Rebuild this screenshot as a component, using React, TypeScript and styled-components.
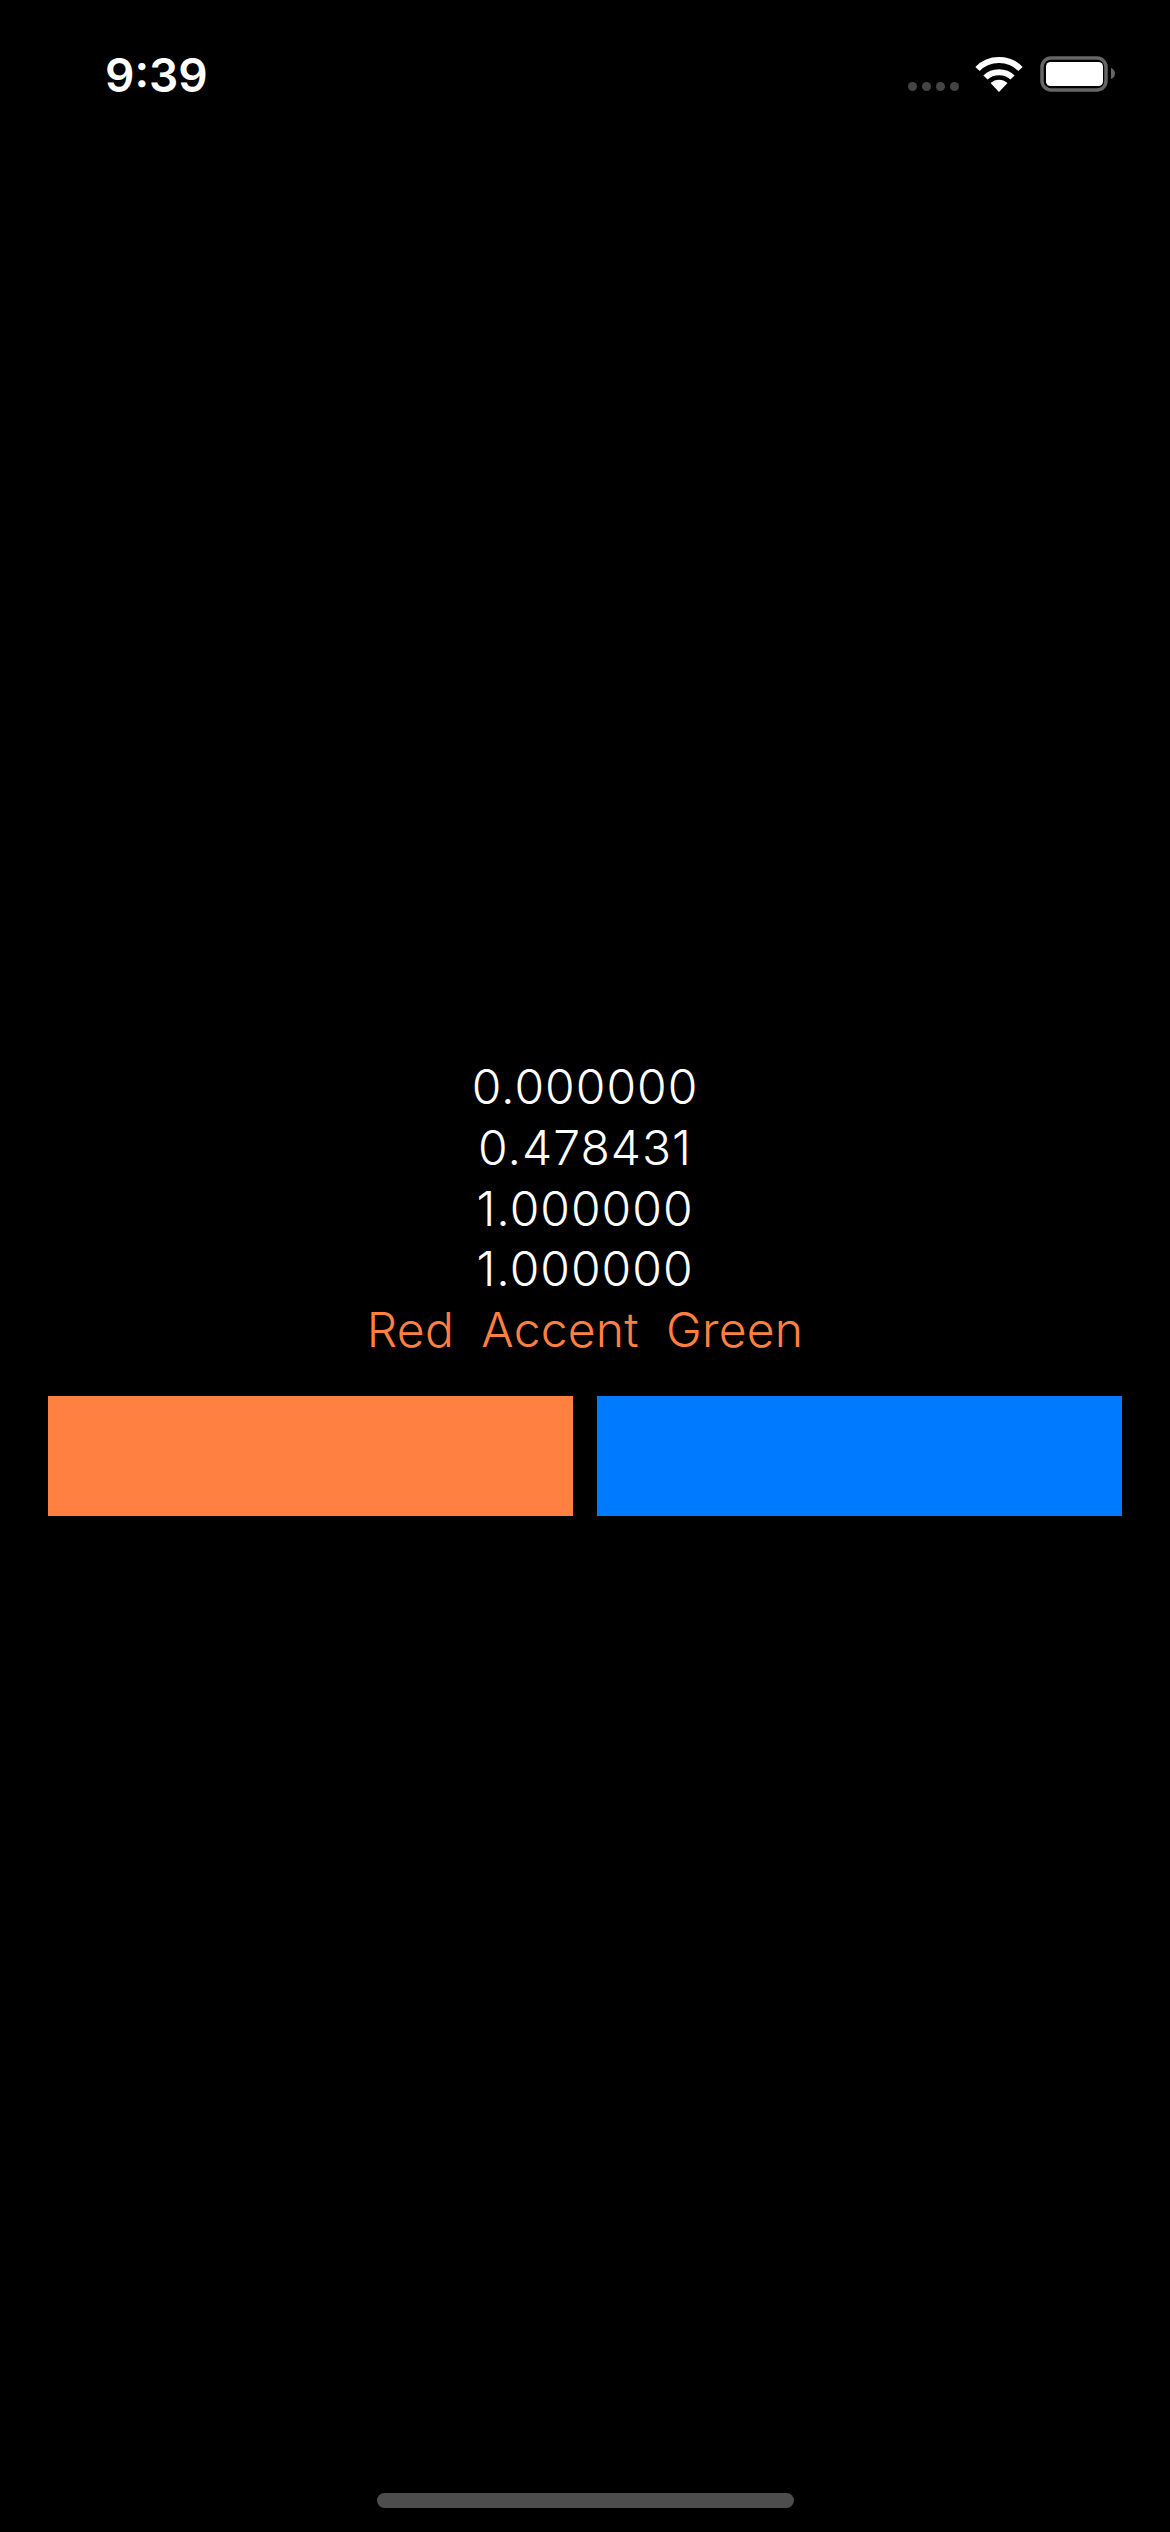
import React from "react";
import styled, { createGlobalStyle } from "styled-components";

const GlobalStyle = createGlobalStyle`
  html, body { margin: 0; padding: 0; background: #000; }
`;

const Screen = styled.div`
  width: 1170px;
  height: 2532px;
  background: #000;
  display: flex;
  flex-direction: column;
  font-family: Inter, "Liberation Sans", sans-serif;
  overflow: hidden;
`;

const StatusBar = styled.header`
  height: 1057px;
  box-sizing: border-box;
  padding: 47px 55px 0 105px;
  display: flex;
  justify-content: space-between;
  align-items: flex-start;
`;

const Clock = styled.span`
  font-size: 46px;
  line-height: 56px;
  font-weight: 600;
  color: #fff;
`;

const StatusIcons = styled.div`
  display: flex;
  align-items: flex-end;
  padding-top: 9px;
`;

const Dots = styled.div`
  display: flex;
  gap: 5px;
  margin-right: 16px;
  margin-bottom: 1px;
`;

const Dot = styled.span`
  width: 9px;
  height: 9px;
  border-radius: 50%;
  background: #444;
`;

const Wifi = styled.svg`
  width: 48px;
  height: 35px;
  margin-right: 17px;
  display: block;
`;

const Battery = styled.svg`
  width: 75px;
  height: 36px;
  display: block;
`;

const Readout = styled.section`
  display: flex;
  flex-direction: column;
  align-items: center;
  font-size: 48px;
  line-height: 60.75px;
  color: #fff;
  font-weight: 350;
`;

const Line = styled.div<{ $accent?: boolean }>`
  white-space: pre;
  letter-spacing: ${(p) => (p.$accent ? "0.2px" : "1px")};
  color: ${(p) => (p.$accent ? "#ff8040" : "#fff")};
`;

const Swatches = styled.div`
  display: flex;
  gap: 24px;
  padding: 0 48px;
  margin-top: 35.25px;
`;

const Swatch = styled.button<{ $color: string }>`
  flex: 1;
  height: 120px;
  border: 0;
  padding: 0;
  background: ${(p) => p.$color};
`;

const Spacer = styled.div`
  flex: 1;
`;

const HomeIndicator = styled.div`
  width: 417px;
  height: 15px;
  border-radius: 8px;
  background: #4d4d4d;
  align-self: center;
  margin-bottom: 24px;
`;

export default function App() {
  return (
    <Screen>
      <GlobalStyle />
      <StatusBar>
        <Clock>9:39</Clock>
        <StatusIcons>
          <Dots>
            <Dot />
            <Dot />
            <Dot />
            <Dot />
          </Dots>
          <Wifi viewBox="0 0 48 35" aria-hidden="true">
            <path
              d="M24 35 L15.5 26 C20.5 21.5 27.5 21.5 32.5 26 Z"
              fill="#fff"
            />
            <path
              d="M10.5 20.5 C17.5 13.5 30.5 13.5 37.5 20.5"
              fill="none"
              stroke="#fff"
              strokeWidth="6"
            />
            <path
              d="M2.5 12 C14 0 34 0 45.5 12"
              fill="none"
              stroke="#fff"
              strokeWidth="6"
            />
          </Wifi>
          <Battery viewBox="0 0 75 36" aria-hidden="true">
            <rect x="2" y="2" width="64" height="32" rx="9" fill="none" stroke="#666" strokeWidth="3.5" />
            <rect x="6" y="6" width="57" height="24" rx="4.5" fill="#fff" />
            <path d="M71 12 C74 13 75 15.5 75 17.5 C75 19.5 74 22 71 23 Z" fill="#666" />
          </Battery>
        </StatusIcons>
      </StatusBar>
      <Readout>
        <Line>0.000000</Line>
        <Line>0.478431</Line>
        <Line>1.000000</Line>
        <Line>1.000000</Line>
        <Line $accent>{"Red  Accent  Green"}</Line>
      </Readout>
      <Swatches>
        <Swatch $color="#ff8040" />
        <Swatch $color="#007aff" />
      </Swatches>
      <Spacer />
      <HomeIndicator />
    </Screen>
  );
}
